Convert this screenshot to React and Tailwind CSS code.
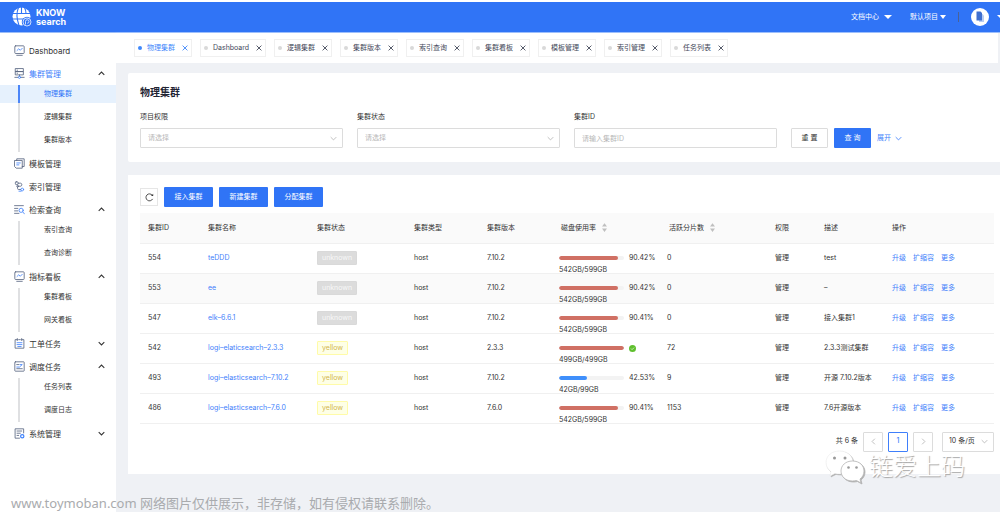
import React from "react";

const DARK = "#56647f";
const BLUE = "#3f82fb";

function Svg({ children, className = "size-[11px]", box = "0 0 20 20" }) {
  return (
    <svg viewBox={box} className={`${className} shrink-0`} fill="none" stroke={DARK} strokeWidth="1.5" strokeLinecap="round" strokeLinejoin="round" aria-hidden="true">
      {children}
    </svg>
  );
}

const MonitorIcon = () => (
  <Svg>
    <rect x="1.5" y="1.5" width="17" height="14" rx="1.5" />
    <path d="M5 18.800h10" />
    <path d="M5.500 10l3-3 3 2.500L15 6" stroke={BLUE} />
  </Svg>
);
const ClusterIcon = () => (
  <Svg>
    <rect x="3" y="1" width="14" height="5.500" />
    <rect x="3" y="6.500" width="14" height="6" />
    <path d="M5.500 4h1M5.500 9.500h1" />
    <path d="M10 12.500v2.500M1.500 17h6M12.500 17h6" />
    <circle cx="10" cy="17" r="2" stroke={BLUE} />
  </Svg>
);
const TemplateIcon = () => (
  <Svg>
    <path d="M5 4.500V1.500h13.500v14H15" />
    <path d="M1.500 4.500H15v14H4l-2.500-2.500z" />
    <path d="M5 9h6.500M5 12.500h4" stroke={BLUE} />
  </Svg>
);
const IndexIcon = () => (
  <Svg>
    <rect x="2.500" y="1.500" width="5" height="5" rx="1.500" />
    <path d="M7.500 4H12a2.800 2.800 0 0 1 0 5.500H8" />
    <circle cx="6.500" cy="9.500" r="1.500" />
    <path d="M6.500 11v2.500a2 2 0 0 0 2 2H12" />
    <circle cx="15" cy="15.500" r="2.500" stroke={BLUE} />
    <path d="M9 18.500h4" stroke={BLUE} />
  </Svg>
);
const SearchListIcon = () => (
  <Svg>
    <path d="M1 3h16M1 8h6M1 12.500h6M1 17h8" />
    <circle cx="13" cy="11.500" r="3.800" stroke={BLUE} />
    <path d="M16 14.500l3 3.500" stroke={BLUE} />
  </Svg>
);
const OrderIcon = () => (
  <Svg>
    <path d="M6 3H2v15.500h16V3h-4M8.500 3h3" />
    <path d="M6 1v3.500M14 1v3.500" />
    <path d="M5.500 8.500h9M5.500 12h9M7 15.500h6" stroke={BLUE} />
  </Svg>
);
const ScheduleIcon = () => (
  <Svg>
    <rect x="1.500" y="1.500" width="17" height="17" rx="1" />
    <path d="M5 6.500h4M5 14h10" />
    <path d="M11 6.500h4l-5 4.500H5" stroke={BLUE} />
  </Svg>
);
const SystemIcon = () => (
  <Svg>
    <path d="M17.500 9V1.500H2v17h8" />
    <path d="M5.500 5.500h8.500M5.500 9.500h6M5.500 13.500h3" />
    <circle cx="15" cy="15" r="3" stroke={BLUE} strokeWidth="2.200" />
  </Svg>
);

function Chevron({ up = false, className = "size-[7px]", color = "#333", width = 1.5 }) {
  return (
    <svg viewBox="0 0 10 10" className={`${className} shrink-0`} fill="none" stroke={color} strokeWidth={width} aria-hidden="true">
      <path d={up ? "M1 7l4-4 4 4" : "M1 3l4 4 4-4"} />
    </svg>
  );
}

const MENU = [
  { label: "Dashboard", Icon: MonitorIcon },
  { label: "集群管理", Icon: ClusterIcon, active: true, children: ["物理集群", "逻辑集群", "集群版本"] },
  { label: "模板管理", Icon: TemplateIcon },
  { label: "索引管理", Icon: IndexIcon },
  { label: "检索查询", Icon: SearchListIcon, children: ["索引查询", "查询诊断"] },
  { label: "指标看板", Icon: MonitorIcon, children: ["集群看板", "网关看板"] },
  { label: "工单任务", Icon: OrderIcon, closed: true },
  { label: "调度任务", Icon: ScheduleIcon, children: ["任务列表", "调度日志"] },
  { label: "系统管理", Icon: SystemIcon, closed: true },
];

const TABS = ["物理集群", "Dashboard", "逻辑集群", "集群版本", "索引查询", "集群看板", "模板管理", "索引管理", "任务列表"];

const ROWS = [
  { id: 554, name: "teDDD", status: "unknown", version: "7.10.2", pct: 90.42, disk: "542GB/599GB", shards: 0, desc: "test" },
  { id: 553, name: "ee", status: "unknown", version: "7.10.2", pct: 90.42, disk: "542GB/599GB", shards: 0, desc: "–", hover: true },
  { id: 547, name: "elk–6.6.1", status: "unknown", version: "7.10.2", pct: 90.41, disk: "542GB/599GB", shards: 0, desc: "接入集群1" },
  { id: 542, name: "logi–elaticsearch–2.3.3", status: "yellow", version: "2.3.3", pct: 100, disk: "499GB/499GB", shards: 72, desc: "2.3.3测试集群" },
  { id: 493, name: "logi–elasticsearch–7.10.2", status: "yellow", version: "7.10.2", pct: 42.53, disk: "42GB/99GB", shards: 9, desc: "开源 7.10.2版本" },
  { id: 486, name: "logi–elasticsearch–7.6.0", status: "yellow", version: "7.6.0", pct: 90.41, disk: "542GB/599GB", shards: 1153, desc: "7.6开源版本" },
];

function Logo() {
  return (
    <a href="#home" className="flex items-center gap-1 text-white">
      <svg viewBox="0 0 40 40" className="size-5 shrink-0" aria-hidden="true">
        <circle cx="19" cy="19" r="18" fill="#fff" />
        <g stroke="#3074f6" fill="none" strokeWidth="2.200">
          <path d="M0 13h40M0 24h24M19 0v13" />
          <path d="M13 1c-4 9-4 22 1 36M25 1c2 4 3 8 3 12" />
        </g>
        <circle cx="30" cy="30" r="10.500" fill="#3074f6" />
        <circle cx="30" cy="30" r="8" fill="none" stroke="#dce8ff" strokeWidth="1.800" />
        <path d="M27 35v-6a3.500 3.500 0 1 1 3.500 3.500" fill="none" stroke="#dce8ff" strokeWidth="1.800" />
      </svg>
      <span className="flex flex-col text-[9px] leading-[9px] font-bold">
        <span>KNOW</span>
        <span>search</span>
      </span>
    </a>
  );
}

function Header() {
  return (
    <header className="mt-[2px] flex h-[31px] items-center justify-between border-b border-[#9dbffc] bg-[#3074f6] pl-3 text-white">
      <Logo />
      <div className="flex items-center text-[7px]">
        <button type="button" className="flex items-center gap-[5px]">
          文档中心
          <svg viewBox="0 0 8 4" className="h-1 w-2 fill-white" aria-hidden="true"><path d="M0 0h8L4 4z" /></svg>
        </button>
        <button type="button" className="ml-[18px] flex items-center gap-[2px]">
          默认项目
          <svg viewBox="0 0 6 4" className="h-1 w-[6px] fill-white" aria-hidden="true"><path d="M0 0h6L3 4z" /></svg>
        </button>
        <span className="ml-3 h-[10px] w-px bg-[#4a6296]" />
        <button type="button" aria-label="账户" className="ml-3 flex items-center gap-2 overflow-hidden">
          <svg viewBox="0 0 36 36" className="size-[18px]" aria-hidden="true">
            <circle cx="18" cy="18" r="18" fill="#fff" />
            <path d="M16 12h7l3 3v13H16z" fill="#b9cdf3" />
            <path d="M11 7h8l3 3v15H11z" fill="#3f6fd0" />
          </svg>
          <svg viewBox="0 0 3 4" className="h-1 w-[3px] fill-white" aria-hidden="true"><path d="M0 0h3v3z" /></svg>
        </button>
      </div>
    </header>
  );
}

function Sidebar() {
  return (
    <nav className="w-[116px] shrink-0 bg-white pt-[6px] shadow-[0_0_2px_rgba(0,0,0,0.06)]">
      <ul>
        {MENU.map(({ label, Icon, active, children, closed }) => (
          <li key={label}>
            <a href="#menu" className={`flex h-[23px] items-center gap-1 pr-[11px] pl-[14px] text-[8px] ${active ? "text-[#3f7ffb]" : "text-[#333]"}`}>
              <Icon />
              <span className="flex-1">{label}</span>
              {children && <Chevron up />}
              {closed && <Chevron />}
            </a>
            {children && (
              <ul className="relative flex flex-col gap-[5px] pb-[3px] before:absolute before:inset-y-0 before:left-[18px] before:w-[2px] before:bg-[#dfe0e2]">
                {children.map((child) => {
                  const current = child === "物理集群";
                  return (
                    <li key={child}>
                      <a
                        href="#menu"
                        aria-current={current ? "page" : undefined}
                        className={`relative flex h-[18px] items-center pl-11 text-[7px] ${current ? "bg-[#e6f1fd] text-[#2f75f8] before:absolute before:inset-y-0 before:left-[18px] before:w-[2px] before:bg-[#4c86f8]" : "text-[#333]"}`}
                      >
                        {child}
                      </a>
                    </li>
                  );
                })}
              </ul>
            )}
          </li>
        ))}
      </ul>
    </nav>
  );
}

function Tabs() {
  return (
    <div className="mr-[2px] flex h-[30px] items-center gap-2 bg-white pl-[18px]">
      {TABS.map((tab, i) => (
        <div key={tab} className={`flex h-[18px] items-center border border-[#f0f0f0] px-[3px] text-[7px] ${i === 0 ? "text-[#3f88fb]" : "text-[#44495a]"}`}>
          <span className={`mr-[5px] size-1 rounded-full ${i === 0 ? "bg-[#3f88fb]" : "bg-[#d9d9d9]"}`} />
          <a href="#tab">{tab}</a>
          <button type="button" aria-label={`关闭${tab}`} className="ml-[7px]">
            <svg viewBox="0 0 10 10" className="size-[6px]" fill="none" stroke="currentColor" strokeWidth="1.500" aria-hidden="true">
              <path d="M1 1l8 8M9 1L1 9" />
            </svg>
          </button>
        </div>
      ))}
    </div>
  );
}

function SelectField({ id, label }) {
  return (
    <div className="flex flex-col gap-1">
      <label htmlFor={id} className="leading-[14px] text-[#333]">{label}</label>
      <div className="relative">
        <select id={id} className="h-5 w-full appearance-none rounded-[1px] border border-[#dcdcdc] bg-white px-[7px] text-[#b8b8b8]">
          <option>请选择</option>
        </select>
        <span className="pointer-events-none absolute inset-y-0 right-[6px] flex items-center">
          <Chevron color="#b5b5b5" width={1.2} />
        </span>
      </div>
    </div>
  );
}

function SearchCard() {
  return (
    <section className="rounded-l-[2px] bg-white pt-3 pr-[6px] pb-[14px] pl-3">
      <h1 className="text-[10px] leading-[14px] font-bold text-[#1f2433]">物理集群</h1>
      <form className="mt-[11px] grid grid-cols-4 gap-[14px] text-[7px]" onSubmit={(e) => e.preventDefault()}>
        <SelectField id="project" label="项目权限" />
        <SelectField id="status" label="集群状态" />
        <div className="flex flex-col gap-1">
          <label htmlFor="cluster" className="leading-[14px] text-[#333]">集群ID</label>
          <input id="cluster" placeholder="请输入集群ID" className="h-5 w-full rounded-[1px] border border-[#dcdcdc] px-[7px] placeholder:text-[#b8b8b8]" />
        </div>
        <div className="flex items-end gap-[6px]">
          <button type="reset" className="h-5 w-[37px] rounded-[1px] border border-[#dcdcdc] text-[#333]">重 置</button>
          <button type="submit" className="h-5 w-[37px] rounded-[1px] bg-[#3074f6] text-white">查 询</button>
          <button type="button" className="flex h-5 items-center gap-1 text-[#3f7ffb]">
            展开
            <Chevron color="#3f7ffb" width={1.2} />
          </button>
        </div>
      </form>
    </section>
  );
}

function SortHeader({ children }) {
  return (
    <span className="flex items-center gap-[6px] pl-[2px]">
      {children}
      <svg viewBox="0 0 8 14" className="h-[9px] w-[5px] fill-[#bfbfbf]" aria-hidden="true">
        <path d="M4 0l4 5.500H0zM4 14l4-5.500H0z" />
      </svg>
    </span>
  );
}

function Disk({ pct, disk }) {
  const full = pct === 100;
  return (
    <div className="h-3 leading-3 whitespace-nowrap">
      <div className="flex h-3 items-center gap-[5px]">
        <div className="h-1 w-[65px] overflow-hidden rounded-full bg-[#f3f3f3]">
          <div className={`h-full rounded-full ${pct > 80 ? "bg-[#d07064]" : "bg-[#3f8ffb]"}`} style={{ width: `${pct}%` }} />
        </div>
        {full ? (
          <svg viewBox="0 0 16 16" className="size-[7px]" role="img" aria-label="已满">
            <circle cx="8" cy="8" r="8" fill="#5fbf2e" />
            <path d="M4.500 8l2.500 2.500L11.500 6" fill="none" stroke="#fff" strokeWidth="1.500" />
          </svg>
        ) : (
          <span>{pct}%</span>
        )}
      </div>
      <div>{disk}</div>
    </div>
  );
}

function ClusterTable() {
  return (
    <table className="mt-[6px] w-full table-fixed text-left text-[7px] text-[#333]">
      <colgroup>
        <col className="w-[60px]" />
        <col className="w-[109px]" />
        <col className="w-[97px]" />
        <col className="w-[73px]" />
        <col className="w-[72px]" />
        <col className="w-[108px]" />
        <col className="w-[108px]" />
        <col className="w-[49px]" />
        <col className="w-[68px]" />
        <col className="w-[110px]" />
      </colgroup>
      <thead>
        <tr className="h-[30px] border-b border-[#f0f0f0] bg-[#fafafa] [&>th]:px-2 [&>th]:py-0 [&>th]:font-normal">
          <th>集群ID</th>
          <th>集群名称</th>
          <th>集群状态</th>
          <th>集群类型</th>
          <th>集群版本</th>
          <th><SortHeader>磁盘使用率</SortHeader></th>
          <th><SortHeader>活跃分片数</SortHeader></th>
          <th>权限</th>
          <th>描述</th>
          <th>操作</th>
        </tr>
      </thead>
      <tbody>
        {ROWS.map((row) => (
          <tr key={row.id} className={`h-[30px] border-b border-[#f0f0f0] [&>td]:py-0 [&>td]:pl-2 [&>td]:whitespace-nowrap ${row.hover ? "bg-[#fafafa]" : ""}`}>
            <td>{row.id}</td>
            <td><a href="#cluster" className="text-[#3f7ffb]">{row.name}</a></td>
            <td>
              <span className={`inline-block rounded-[1px] border px-1 leading-[12px] ${row.status === "yellow" ? "border-[#fffba8] bg-[#feffe6] text-[#d3b74e]" : "border-[#d9d9d9] bg-[#dcdcdc] text-[#f8f8f8]"}`}>
                {row.status}
              </span>
            </td>
            <td>host</td>
            <td>{row.version}</td>
            <td><Disk pct={row.pct} disk={row.disk} /></td>
            <td>{row.shards}</td>
            <td>管理</td>
            <td>{row.desc}</td>
            <td>
              <span className="flex gap-[7px] text-[#3f7ffb]">
                <a href="#upgrade">升级</a>
                <a href="#scale">扩缩容</a>
                <a href="#more">更多</a>
              </span>
            </td>
          </tr>
        ))}
      </tbody>
    </table>
  );
}

function Pagination() {
  return (
    <div className="mt-2 flex items-center justify-end text-[7px] text-[#333]">
      <span className="mr-[5px]">共 6 条</span>
      <div className="flex gap-[5px]">
        <button type="button" aria-label="上一页" className="flex h-5 w-5 items-center justify-center rounded-[1px] border border-[#dcdcdc]">
          <Chevron className="size-[7px] rotate-90" color="#b5b5b5" width={1.2} />
        </button>
        <button type="button" aria-current="page" className="h-5 w-5 rounded-[1px] border border-[#3f7ffb] font-medium text-[#3f7ffb]">1</button>
        <button type="button" aria-label="下一页" className="flex h-5 w-5 items-center justify-center rounded-[1px] border border-[#dcdcdc]">
          <Chevron className="size-[7px] -rotate-90" color="#b5b5b5" width={1.2} />
        </button>
      </div>
      <div className="relative ml-[9px]">
        <select aria-label="每页条数" className="h-5 w-[52px] appearance-none rounded-[1px] border border-[#dcdcdc] bg-white px-[6px]">
          <option>10 条/页</option>
        </select>
        <span className="pointer-events-none absolute inset-y-0 right-[6px] flex items-center">
          <Chevron color="#b5b5b5" width={1.2} />
        </span>
      </div>
    </div>
  );
}

function ChatMark() {
  return (
    <div className="pointer-events-none absolute right-[35px] -bottom-[10px] flex items-center gap-1">
      <svg viewBox="0 0 40 34" className="h-[34px] w-10 drop-shadow-[1px_1px_0px_#b0b0b0]" aria-hidden="true">
        <path d="M14.500 1C6.500 1 1 6 1 12.500c0 4 2 7 5 9.200L5 26l5-2.600c1.500.4 3 .6 4.500.6C22.500 24 28 19 28 12.500S22.500 1 14.500 1z" fill="#fff" stroke="#e6e6e6" strokeWidth=".5" />
        <circle cx="9.500" cy="8" r="1.500" fill="#999" />
        <circle cx="20" cy="8" r="1.500" fill="#999" />
        <path d="M27.500 11C20.500 11 16 15.500 16 21s4.500 10 11.500 10c1.500 0 2.800-.2 4-.5l4.500 2.500-1-4c2.500-2 4-4.500 4-8 0-5.500-4.500-10-11.500-10z" fill="#fff" stroke="#b5b5b5" strokeWidth=".8" />
        <circle cx="23.500" cy="17.500" r="1.300" fill="#999" />
        <circle cx="31.500" cy="17.500" r="1.300" fill="#999" />
      </svg>
      <span className="text-[24px] leading-[34px] font-light text-white [text-shadow:1px_1px_1px_#a3a3a3]">链爱上码</span>
    </div>
  );
}

function ResultCard() {
  return (
    <section className="relative mt-[13px] bg-white pt-3 pr-[6px] pb-[22px] pl-3">
      <div className="flex items-center gap-[6px] text-[7px] text-white">
        <button type="button" aria-label="刷新" className="flex size-[18px] items-center justify-center border border-[#e6e6e6]">
          <svg viewBox="0 0 16 16" className="size-[9px]" fill="none" stroke="#333" strokeWidth="1.500" aria-hidden="true">
            <path d="M13.500 10.500A6.200 6.200 0 1 1 13 4.200" />
            <path d="M14.500 1.500v4h-4z" fill="#333" stroke="none" />
          </svg>
        </button>
        {["接入集群", "新建集群", "分配集群"].map((t) => (
          <button key={t} type="button" className="h-5 w-[49px] rounded-[1px] bg-[#3074f6]">{t}</button>
        ))}
      </div>
      <ClusterTable />
      <Pagination />
      <ChatMark />
    </section>
  );
}

export default function App() {
  return (
    <div className="relative flex min-h-screen flex-col overflow-hidden bg-white font-['Inter','Noto_Sans_CJK_SC',sans-serif] leading-normal">
      <Header />
      <div className="flex flex-1">
        <Sidebar />
        <div className="min-w-0 flex-1 bg-[#eff1f5]">
          <Tabs />
          <main className="pt-[10px] pl-3">
            <SearchCard />
            <ResultCard />
          </main>
        </div>
      </div>
      <p className="pointer-events-none absolute bottom-0 left-[11px] font-['Noto_Sans','Noto_Sans_CJK_SC',sans-serif] text-[13px] leading-[18px] text-[#a9abae]">
        www.toymoban.com 网络图片仅供展示，非存储，如有侵权请联系删除。
      </p>
    </div>
  );
}
